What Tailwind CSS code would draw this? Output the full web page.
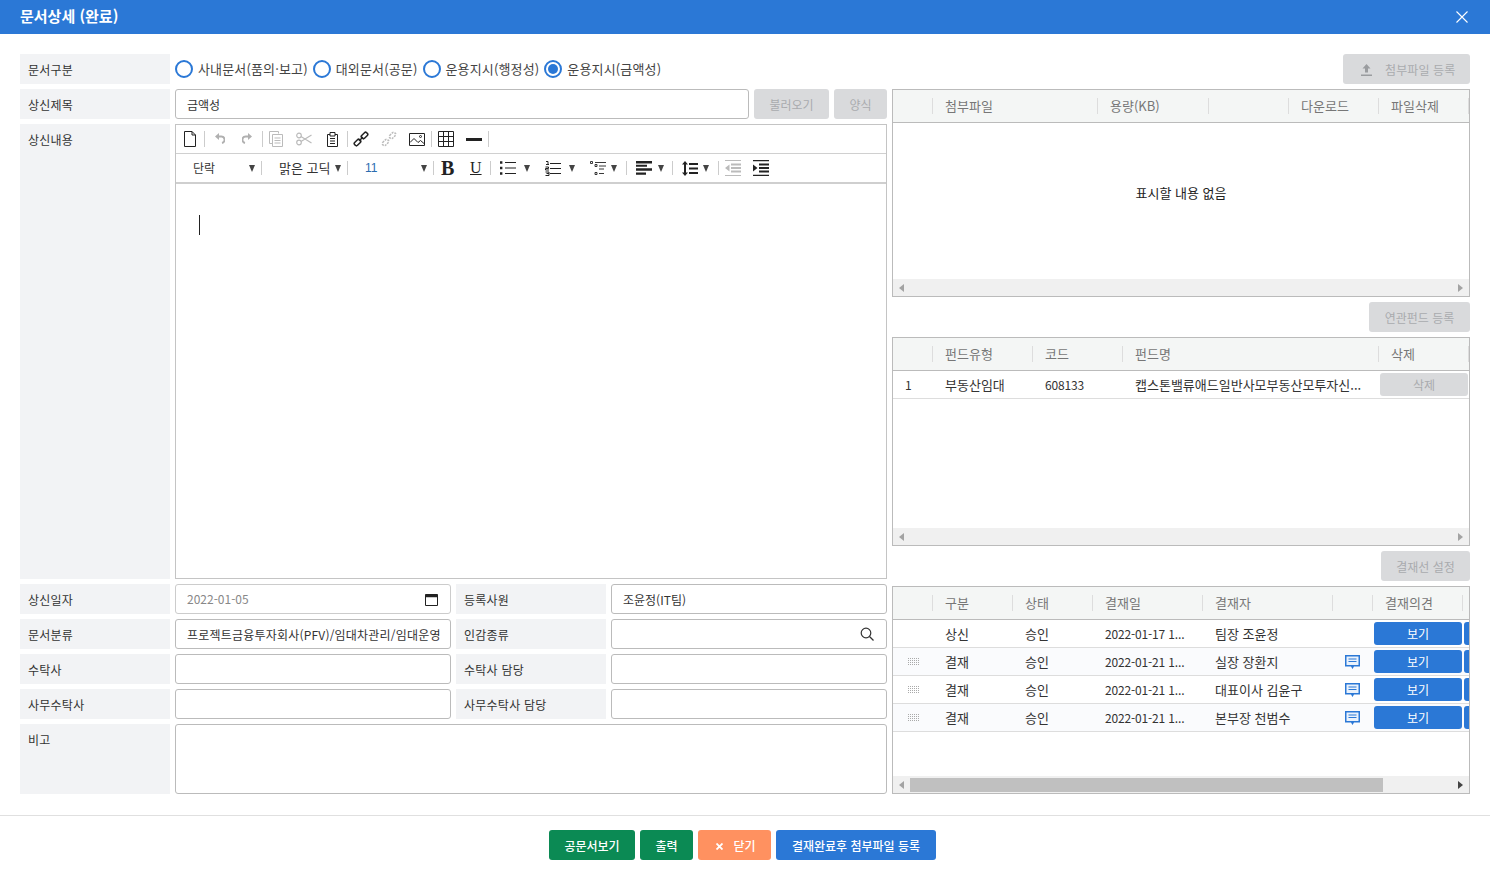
<!DOCTYPE html>
<html lang="ko"><head><meta charset="utf-8"><title>문서상세</title>
<script src="https://cdn.jsdelivr.net/npm/@tailwindcss/browser@4"></script></head>
<body class="m-0 bg-white">
<div class="w-[1490px] h-[875px] overflow-hidden flex flex-col font-['Noto_Sans_CJK_KR','Noto_Sans',sans-serif] text-[12px] text-[#333] bg-white">
  <header class="h-[34px] shrink-0 bg-[#2b78d6] flex items-center justify-between pl-5 pr-[22px] pb-[2px] text-white">
    <h1 class="text-[15px] font-bold">문서상세 (완료)</h1>
    <svg class="mt-[2px]" width="12" height="12" viewBox="0 0 12 12" fill="none" stroke="#fff" stroke-width="1.1"><path d="M0.5 0.5 11.5 11.5M11.5 0.5 0.5 11.5"/></svg>
  </header>

  <main class="flex gap-[5px] px-5 pt-5 h-[781px] shrink-0">
    <!-- left -->
    <div class="w-[867px] flex flex-col gap-[5px]">
      <div class="flex gap-[5px] h-[30px]">
        <div class="w-[150px] bg-[#f2f3f5] flex items-center pl-2 pt-[2px] tracking-[0.25px]">문서구분</div>
        <div class="flex items-center text-[13px] text-[#444] tracking-[0.15px]">
          <span class="w-[18px] h-[18px] rounded-full border-2 border-[#2b78d6]"></span><span class="ml-[5px]">사내문서(품의·보고)</span>
          <span class="ml-[5px] w-[18px] h-[18px] rounded-full border-2 border-[#2b78d6]"></span><span class="ml-[5px]">대외문서(공문)</span>
          <span class="ml-[5px] w-[18px] h-[18px] rounded-full border-2 border-[#2b78d6]"></span><span class="ml-[5px]">운용지시(행정성)</span>
          <span class="ml-[5px] w-[18px] h-[18px] rounded-full border-2 border-[#2b78d6] flex items-center justify-center"><span class="w-[10px] h-[10px] rounded-full bg-[#2b78d6]"></span></span><span class="ml-[5px]">운용지시(금액성)</span>
        </div>
      </div>
      <div class="flex gap-[5px] h-[30px]">
        <div class="w-[150px] bg-[#f2f3f5] flex items-center pl-2 pt-[2px] tracking-[0.25px]">상신제목</div>
        <div class="w-[574px] border border-[#bbb] rounded-[3px] flex items-center pl-[11px] pt-[2px]">금액성</div>
        <button class="w-[75px] bg-[#d9dadc] rounded-[3px] text-[#a9abae] pt-[2px]">불러오기</button>
        <button class="w-[53px] bg-[#d9dadc] rounded-[3px] text-[#a9abae] pt-[2px]">양식</button>
      </div>
      <div class="flex gap-[5px] h-[455px]">
        <div class="w-[150px] bg-[#f2f3f5] pl-2 pt-[7px] tracking-[0.25px]">상신내용</div>
        <div class="w-[712px] border border-[#c4c4c4] flex flex-col">
          <div class="h-[29px] shrink-0 flex items-center border-b border-[#d0d0d0] text-[#333]">
            <svg class="ml-[8px]" width="12" height="16" viewBox="0 0 12 16" fill="none" stroke="#222"><path d="M.5.5h7.500l3.500 3.500v11.500H.5zM8 .5v3.500h3.500"/></svg>
            <span class="ml-[8px] w-px h-[16px] bg-[#ccc]"></span>
            <svg class="ml-[10px]" width="10" height="12" viewBox="0 0 10 12" fill="none"><path fill="#b0b0b0" d="M4 0v7L0 3.500z"/><path stroke="#b0b0b0" stroke-width="2" d="M3 3.500h2.500a3.300 3.300 0 0 1 1.500 6.500"/></svg>
            <svg class="ml-[17px]" width="10" height="12" viewBox="0 0 10 12" fill="none"><path fill="#b0b0b0" d="M6 0v7l4-3.500z"/><path stroke="#b0b0b0" stroke-width="2" d="M7 3.500H4.500a3.300 3.300 0 0 0-1.500 6.500"/></svg>
            <span class="ml-[10px] w-px h-[16px] bg-[#ccc]"></span>
            <svg class="ml-[6px]" width="14" height="16" viewBox="0 0 14 16" fill="none" stroke="#bbb"><path d="M.5.500h9v2M3.500 3.500h10v12h-10zM.5.500v12h3M5.500 7h6M5.500 9.500h6M5.500 12h6"/></svg>
            <svg class="ml-[13px]" width="16" height="14" viewBox="0 0 16 14" fill="none" stroke="#bbb" stroke-width="1.200"><circle cx="3" cy="3.500" r="2.300"/><circle cx="3" cy="10.500" r="2.300"/><path d="M5 4.500 15.500 11M5 9.500 15.500 3"/></svg>
            <svg class="ml-[15px]" width="11" height="15" viewBox="0 0 11 15" fill="none" stroke="#222"><path d="M3 2.500H.5v12h10v-12H8M3 .5h5v3.500H3zM3 6.500h5M3 9h5M3 11.500h5"/></svg>
            <span class="ml-[9px] w-px h-[16px] bg-[#ccc]"></span>
            <svg class="ml-[5px]" width="16" height="16" viewBox="0 0 16 16" fill="none" stroke="#222" stroke-width="1.500"><rect x="-3.500" y="-2" width="7" height="4" rx="1.500" transform="translate(4.500 11.500) rotate(-45)"/><rect x="-3.500" y="-2" width="7" height="4" rx="1.500" transform="translate(11.500 4.500) rotate(-45)"/><path d="M6 10 10 6"/></svg>
            <svg class="ml-[12px]" width="16" height="16" viewBox="0 0 16 16" fill="none" stroke="#bbb" stroke-width="1.500" stroke-dasharray="2 1"><rect x="-3.500" y="-2" width="7" height="4" rx="1.500" transform="translate(4.500 11.500) rotate(-45)"/><rect x="-3.500" y="-2" width="7" height="4" rx="1.500" transform="translate(11.500 4.500) rotate(-45)"/></svg>
            <svg class="ml-[12px]" width="16" height="13" viewBox="0 0 16 13" fill="none" stroke="#222"><path d="M.5.5h15v12H.5zM1 9.500l4-4 4 4 2.500-2 3.500 3"/><circle cx="11.500" cy="3.500" r="1"/></svg>
            <span class="ml-[6px] w-px h-[16px] bg-[#ccc]"></span>
            <svg class="ml-[6px]" width="16" height="16" viewBox="0 0 16 16" fill="none" stroke="#222"><path d="M.5.5h15v15H.5zM5.500.5v15M10.500.5v15M.5 5.500h15M.5 10.500h15"/></svg>
            <span class="ml-[12px] w-[16px] h-[3px] bg-[#222]"></span>
            <span class="ml-[6px] w-px h-[16px] bg-[#ccc]"></span>
          </div>
          <div class="h-[30px] shrink-0 flex items-center border-b-2 border-[#cfcfcf] text-[#333]">
            <span class="ml-[17px] w-[56px]">단락</span>
            <svg width="6" height="7" viewBox="0 0 6 7"><path fill="#444" d="M0 0h6L3 7z"/></svg>
            <span class="ml-[6px] w-px h-[14px] bg-[#ccc]"></span>
            <span class="ml-[17px] w-[56px] text-[13px]">맑은 고딕</span>
            <svg width="6" height="7" viewBox="0 0 6 7"><path fill="#444" d="M0 0h6L3 7z"/></svg>
            <span class="ml-[6px] w-px h-[14px] bg-[#ccc]"></span>
            <span class="ml-[17px] w-[56px] text-[#2b6cb0] font-['Liberation_Sans',sans-serif]">11</span>
            <svg width="6" height="7" viewBox="0 0 6 7"><path fill="#444" d="M0 0h6L3 7z"/></svg>
            <span class="ml-[6px] w-px h-[14px] bg-[#ccc]"></span>
            <span class="ml-[7px] w-[15px] text-[20px] leading-none font-bold font-['Liberation_Serif',serif] text-[#222]">B</span>
            <span class="ml-[14px] w-[13px] text-[16px] leading-[18px] underline font-['Liberation_Serif',serif] text-[#222]">U</span>
            <span class="ml-[7px] w-px h-[14px] bg-[#ccc]"></span>
            <svg class="ml-[9px]" width="16" height="14" viewBox="0 0 16 14" fill="none" stroke="#222"><path d="M5 1.500h11M5 7h11M5 12.500h11"/><path stroke-width="2.400" stroke-dasharray="2.400 3.100" d="M1.200 .3v13.400"/></svg>
            <svg class="ml-[8px]" width="6" height="7" viewBox="0 0 6 7"><path fill="#444" d="M0 0h6L3 7z"/></svg>
            <span class="ml-[7px] w-px h-[14px] bg-transparent"></span>
            <svg class="ml-[7px]" width="16" height="15" viewBox="0 0 16 15" fill="none" stroke="#222"><path d="M5 2.500h11M5 7.500h11M5 12.500h11M1 .5h2v3M1 3.500h3M.5 6h3v1.500h-3v1.500h3.500M.5 11h3.500v3.500H.5M1.500 12.500H4"/></svg>
            <svg class="ml-[8px]" width="6" height="7" viewBox="0 0 6 7"><path fill="#444" d="M0 0h6L3 7z"/></svg>
            <span class="ml-[7px] w-px h-[14px] bg-transparent"></span>
            <svg class="ml-[7px]" width="16" height="15" viewBox="0 0 16 15" fill="none" stroke="#222"><path d="M.5.5h2v2h-2zM5 3.500h2v2H5zM5 11.500h2v2H5zM5 1.500h11M9 5h7M9 8h5M9 12.500h5" stroke-width=".9"/></svg>
            <svg class="ml-[5px]" width="6" height="7" viewBox="0 0 6 7"><path fill="#444" d="M0 0h6L3 7z"/></svg>
            <span class="ml-[9px] w-px h-[14px] bg-[#ccc]"></span>
            <svg class="ml-[9px]" width="16" height="14" viewBox="0 0 16 14"><path fill="#222" d="M0 0h16v2.500H0zM0 3.800h11v2H0zM0 7.300h16v2.500H0zM0 11.500h10v2.200H0z"/></svg>
            <svg class="ml-[6px]" width="6" height="7" viewBox="0 0 6 7"><path fill="#444" d="M0 0h6L3 7z"/></svg>
            <span class="ml-[8px] w-px h-[14px] bg-[#ccc]"></span>
            <svg class="ml-[9px]" width="16" height="15" viewBox="0 0 16 15"><path fill="#222" d="M7 2h9v2H7zM7 6.500h9v2H7zM7 11h9v2H7zM3 0l3 3.500H4v8h2L3 15l-3-3.500h2v-8H0z"/></svg>
            <svg class="ml-[5px]" width="6" height="7" viewBox="0 0 6 7"><path fill="#444" d="M0 0h6L3 7z"/></svg>
            <span class="ml-[9px] w-px h-[14px] bg-[#ccc]"></span>
            <svg class="ml-[6px]" width="16" height="16" viewBox="0 0 16 16"><path fill="#bbb" d="M0 0h16v1H0zM6 3.500h10v2H6zM6 7h10v2H6zM6 10.500h10v2H6zM0 15h16v1H0zM4.500 4.500v7L0 8z"/></svg>
            <svg class="ml-[12px]" width="16" height="16" viewBox="0 0 16 16"><path fill="#222" d="M0 0h16v1.200H0zM6 3.500h10v2H6zM6 7h10v2H6zM6 10.500h10v2H6zM0 14.800h16V16H0zM0 4.500v7L4.500 8z"/></svg>
          </div>
          <div class="flex-1 relative">
            <span class="absolute left-[23px] top-[31px] w-px h-[20px] bg-[#222]"></span>
          </div>
        </div>
      </div>
      <div class="flex gap-[5px] h-[30px]">
        <div class="w-[150px] bg-[#f2f3f5] flex items-center pl-2 pt-[2px] tracking-[0.25px]">상신일자</div>
        <div class="w-[276px] border border-[#ccc] rounded-[3px] flex items-center justify-between pl-[11px] pr-[12px] text-[#888]">2022-01-05
          <svg width="13" height="13" viewBox="0 0 13 13" fill="none" stroke="#222"><path d="M.5 1.500h12v11H.5z"/><path stroke-width="2.500" d="M0 3h13"/></svg></div>
        <div class="w-[150px] bg-[#f2f3f5] flex items-center pl-2 pt-[2px] tracking-[0.25px]">등록사원</div>
        <div class="w-[276px] border border-[#bbb] rounded-[3px] flex items-center pl-[11px] pt-[2px]">조윤정(IT팀)</div>
      </div>
      <div class="flex gap-[5px] h-[30px]">
        <div class="w-[150px] bg-[#f2f3f5] flex items-center pl-2 pt-[2px] tracking-[0.25px]">문서분류</div>
        <div class="w-[276px] border border-[#bbb] rounded-[3px] flex items-center pl-[11px] pr-[6px] pt-[2px] whitespace-nowrap tracking-[0.2px]"><span>프로젝트금융투자회사(PFV)/임대차관리/임대운영</span></div>
        <div class="w-[150px] bg-[#f2f3f5] flex items-center pl-2 pt-[2px] tracking-[0.25px]">인감종류</div>
        <div class="w-[276px] border border-[#bbb] rounded-[3px] flex items-center justify-end pr-[12px]">
          <svg width="14" height="14" viewBox="0 0 14 14" fill="none" stroke="#333" stroke-width="1.200"><circle cx="6" cy="6" r="4.800"/><path d="M9.500 9.500 13.500 13.500"/></svg></div>
      </div>
      <div class="flex gap-[5px] h-[30px]">
        <div class="w-[150px] bg-[#f2f3f5] flex items-center pl-2 pt-[2px] tracking-[0.25px]">수탁사</div>
        <div class="w-[276px] border border-[#bbb] rounded-[3px]"></div>
        <div class="w-[150px] bg-[#f2f3f5] flex items-center pl-2 pt-[2px] tracking-[0.25px]">수탁사 담당</div>
        <div class="w-[276px] border border-[#bbb] rounded-[3px]"></div>
      </div>
      <div class="flex gap-[5px] h-[30px]">
        <div class="w-[150px] bg-[#f2f3f5] flex items-center pl-2 pt-[2px] tracking-[0.25px]">사무수탁사</div>
        <div class="w-[276px] border border-[#bbb] rounded-[3px]"></div>
        <div class="w-[150px] bg-[#f2f3f5] flex items-center pl-2 pt-[2px] tracking-[0.25px]">사무수탁사 담당</div>
        <div class="w-[276px] border border-[#bbb] rounded-[3px]"></div>
      </div>
      <div class="flex gap-[5px] h-[70px]">
        <div class="w-[150px] bg-[#f2f3f5] pl-2 pt-[7px] tracking-[0.25px]">비고</div>
        <div class="w-[712px] border border-[#bbb] rounded-[3px]"></div>
      </div>
    </div>

    <!-- right -->
    <div class="w-[578px] flex flex-col gap-[5px]">
      <div class="h-[30px] flex justify-end">
        <button class="w-[127px] bg-[#d9dadc] rounded-[3px] text-[#a9abae] flex items-center pl-[18px] tracking-[0.1px]">
          <svg width="11" height="12" class="mt-[2px]" viewBox="0 0 11 12"><path fill="#9a9c9f" d="M5.500 0l4 4.500H7v4H4v-4H1.500zM0 10.500h11V12H0z"/></svg>
          <span class="ml-[13px] pt-[2px]">첨부파일 등록</span>
        </button>
      </div>

      <div class="h-[208px] border border-[#bbb] flex flex-col">
        <div class="h-[33px] shrink-0 bg-[#f4f6f5] border-b border-[#bbb] flex items-center text-[#777] text-[13px] *:shrink-0">
          <span class="w-[39px]"></span>
          <span class="w-[165px] h-[16px] leading-[16px] border-l border-[#ddd] pl-3">첨부파일</span>
          <span class="w-[111px] h-[16px] leading-[16px] border-l border-[#ddd] pl-3">용량(KB)</span>
          <span class="w-[80px] h-[16px] border-l border-[#ddd]"></span>
          <span class="w-[90px] h-[16px] leading-[16px] border-l border-[#ddd] pl-3">다운로드</span>
          <span class="w-[90px] h-[16px] leading-[16px] border-l border-[#ddd] pl-3">파일삭제</span>
          <span class="h-[16px] border-l border-[#ddd]"></span>
        </div>
        <div class="flex-1 flex items-center justify-center text-[#222] text-[13px] pb-[16px]">표시할 내용 없음</div>
        <div class="h-[17px] shrink-0 bg-[#f0f0f0] flex items-center justify-between px-[6px]">
          <svg width="5" height="8" viewBox="0 0 5 8"><path fill="#a3a3a3" d="M5 0v8L0 4z"/></svg>
          <svg width="5" height="8" viewBox="0 0 5 8"><path fill="#a3a3a3" d="M0 0v8l5-4z"/></svg>
        </div>
      </div>

      <div class="h-[30px] flex justify-end">
        <button class="w-[101px] bg-[#d9dadc] rounded-[3px] text-[#a9abae] pt-[2px]">연관펀드 등록</button>
      </div>

      <div class="h-[209px] border border-[#bbb] flex flex-col">
        <div class="h-[33px] shrink-0 bg-[#f4f6f5] border-b border-[#bbb] flex items-center text-[#777] text-[13px] *:shrink-0">
          <span class="w-[39px]"></span>
          <span class="w-[100px] h-[16px] leading-[15px] border-l border-[#ddd] pl-3">펀드유형</span>
          <span class="w-[90px] h-[16px] leading-[15px] border-l border-[#ddd] pl-3">코드</span>
          <span class="w-[256px] h-[16px] leading-[15px] border-l border-[#ddd] pl-3">펀드명</span>
          <span class="w-[90px] h-[16px] leading-[15px] border-l border-[#ddd] pl-3">삭제</span>
          <span class="h-[16px] border-l border-[#ddd]"></span>
        </div>
        <div class="h-[28px] shrink-0 border-b border-[#ddd] flex items-center text-[13px] *:shrink-0">
          <span class="w-[39px] pl-3 text-[12px]">1</span>
          <span class="w-[100px] pl-[13px]">부동산임대</span>
          <span class="w-[90px] pl-[13px] text-[12px] tracking-[-0.15px]">608133</span>
          <span class="w-[256px] pl-[13px] whitespace-nowrap">캡스톤밸류애드일반사모부동산모투자신...</span>
          <button class="ml-[2px] w-[88px] h-[23px] bg-[#d9dadc] rounded-[3px] text-[#a9abae] text-[12px]">삭제</button>
        </div>
        <div class="flex-1"></div>
        <div class="h-[17px] shrink-0 bg-[#f0f0f0] flex items-center justify-between px-[6px]">
          <svg width="5" height="8" viewBox="0 0 5 8"><path fill="#a3a3a3" d="M5 0v8L0 4z"/></svg>
          <svg width="5" height="8" viewBox="0 0 5 8"><path fill="#a3a3a3" d="M0 0v8l5-4z"/></svg>
        </div>
      </div>

      <div class="h-[30px] flex justify-end">
        <button class="w-[89px] bg-[#d9dadc] rounded-[3px] text-[#a9abae] pt-[2px]">결재선 설정</button>
      </div>

      <div class="h-[208px] border border-[#bbb] flex flex-col overflow-hidden">
        <div class="h-[33px] shrink-0 bg-[#f4f6f5] border-b border-[#bbb] flex items-center text-[#777] text-[13px] *:shrink-0">
          <span class="w-[39px]"></span>
          <span class="w-[80px] h-[16px] leading-[15px] border-l border-[#ddd] pl-3">구분</span>
          <span class="w-[80px] h-[16px] leading-[15px] border-l border-[#ddd] pl-3">상태</span>
          <span class="w-[110px] h-[16px] leading-[15px] border-l border-[#ddd] pl-3">결재일</span>
          <span class="w-[130px] h-[16px] leading-[15px] border-l border-[#ddd] pl-3">결재자</span>
          <span class="w-[40px] h-[16px] border-l border-[#ddd]"></span>
          <span class="w-[90px] h-[16px] leading-[15px] border-l border-[#ddd] pl-3">결재의견</span>
          <span class="h-[16px] border-l border-[#ddd]"></span>
        </div>
        <div class="h-[28px] shrink-0 border-b border-[#ddd] flex items-center text-[13px] *:shrink-0">
          <span class="w-[39px]"></span><span class="w-[80px] pl-[13px]">상신</span><span class="w-[80px] pl-[13px]">승인</span><span class="w-[110px] pl-[13px] text-[12px] tracking-[-0.15px]">2022-01-17 1...</span><span class="w-[130px] pl-[13px]">팀장 조윤정</span><span class="w-[42px]"></span>
          <button class="w-[88px] h-[23px] bg-[#2b78d6] rounded-[3px] text-white text-[12px]">보기</button><span class="ml-[2px] w-[20px] h-[23px] bg-[#2b78d6] rounded-[3px]"></span>
        </div>
        <div class="h-[28px] shrink-0 border-b border-[#ddd] bg-[#fafbfd] flex items-center text-[13px] *:shrink-0">
          <span class="w-[39px] pl-[15px]"><svg width="11" height="8" viewBox="0 0 11 8" fill="none" stroke="#aaa" stroke-dasharray="1 1"><path d="M0 .5h11M0 2.500h11M0 4.500h11M0 6.500h11" stroke-width="1"/></svg></span><span class="w-[80px] pl-[13px]">결재</span><span class="w-[80px] pl-[13px]">승인</span><span class="w-[110px] pl-[13px] text-[12px] tracking-[-0.15px]">2022-01-21 1...</span><span class="w-[130px] pl-[13px]">실장 장환지</span>
          <span class="w-[42px] pl-[13px]"><svg width="15" height="14" viewBox="0 0 15 14"><path fill="#2b78d6" d="M0 0h15v11.500H9L7.500 14 6 11.500H0z"/><path fill="#eaf2fc" d="M1.500 1.500h12v8.500h-12z"/><path fill="#2b78d6" d="M3.500 3.500h8v1h-8zM3.500 6h8v1h-8z"/></svg></span>
          <button class="w-[88px] h-[23px] bg-[#2b78d6] rounded-[3px] text-white text-[12px]">보기</button><span class="ml-[2px] w-[20px] h-[23px] bg-[#2b78d6] rounded-[3px]"></span>
        </div>
        <div class="h-[28px] shrink-0 border-b border-[#ddd] flex items-center text-[13px] *:shrink-0">
          <span class="w-[39px] pl-[15px]"><svg width="11" height="8" viewBox="0 0 11 8" fill="none" stroke="#aaa" stroke-dasharray="1 1"><path d="M0 .5h11M0 2.500h11M0 4.500h11M0 6.500h11" stroke-width="1"/></svg></span><span class="w-[80px] pl-[13px]">결재</span><span class="w-[80px] pl-[13px]">승인</span><span class="w-[110px] pl-[13px] text-[12px] tracking-[-0.15px]">2022-01-21 1...</span><span class="w-[130px] pl-[13px]">대표이사 김윤구</span>
          <span class="w-[42px] pl-[13px]"><svg width="15" height="14" viewBox="0 0 15 14"><path fill="#2b78d6" d="M0 0h15v11.500H9L7.500 14 6 11.500H0z"/><path fill="#eaf2fc" d="M1.500 1.500h12v8.500h-12z"/><path fill="#2b78d6" d="M3.500 3.500h8v1h-8zM3.500 6h8v1h-8z"/></svg></span>
          <button class="w-[88px] h-[23px] bg-[#2b78d6] rounded-[3px] text-white text-[12px]">보기</button><span class="ml-[2px] w-[20px] h-[23px] bg-[#2b78d6] rounded-[3px]"></span>
        </div>
        <div class="h-[28px] shrink-0 border-b border-[#ddd] bg-[#fafbfd] flex items-center text-[13px] *:shrink-0">
          <span class="w-[39px] pl-[15px]"><svg width="11" height="8" viewBox="0 0 11 8" fill="none" stroke="#aaa" stroke-dasharray="1 1"><path d="M0 .5h11M0 2.500h11M0 4.500h11M0 6.500h11" stroke-width="1"/></svg></span><span class="w-[80px] pl-[13px]">결재</span><span class="w-[80px] pl-[13px]">승인</span><span class="w-[110px] pl-[13px] text-[12px] tracking-[-0.15px]">2022-01-21 1...</span><span class="w-[130px] pl-[13px]">본부장 천범수</span>
          <span class="w-[42px] pl-[13px]"><svg width="15" height="14" viewBox="0 0 15 14"><path fill="#2b78d6" d="M0 0h15v11.500H9L7.500 14 6 11.500H0z"/><path fill="#eaf2fc" d="M1.500 1.500h12v8.500h-12z"/><path fill="#2b78d6" d="M3.500 3.500h8v1h-8zM3.500 6h8v1h-8z"/></svg></span>
          <button class="w-[88px] h-[23px] bg-[#2b78d6] rounded-[3px] text-white text-[12px]">보기</button><span class="ml-[2px] w-[20px] h-[23px] bg-[#2b78d6] rounded-[3px]"></span>
        </div>
        <div class="flex-1"></div>
        <div class="h-[17px] shrink-0 bg-[#f0f0f0] flex items-center pl-[6px] pr-[6px]">
          <svg width="5" height="8" viewBox="0 0 5 8"><path fill="#a3a3a3" d="M5 0v8L0 4z"/></svg>
          <span class="ml-[6px] w-[473px] h-[14px] bg-[#c0c0c0]"></span>
          <svg class="ml-auto" width="5" height="8" viewBox="0 0 5 8"><path fill="#444" d="M0 0v8l5-4z"/></svg>
        </div>
      </div>
    </div>
  </main>

  <footer class="flex-1 border-t border-[#e0e0e0] flex justify-center items-start gap-[5px] pt-[14px] pr-[5px]">
    <button class="w-[86px] h-[30px] bg-[#0b8a54] rounded-[3px] text-white font-medium pt-[2px]">공문서보기</button>
    <button class="w-[53px] h-[30px] bg-[#0b8a54] rounded-[3px] text-white font-medium pt-[2px]">출력</button>
    <button class="w-[73px] h-[30px] bg-[#ff9160] rounded-[3px] text-white font-medium flex items-center justify-center gap-[10px] pl-[3px] pt-[2px]">
      <svg width="7" height="7" viewBox="0 0 7 7" fill="none" stroke="#fff" stroke-width="1.800"><path d="M.5.5l6 6M6.500.5l-6 6"/></svg><span>닫기</span></button>
    <button class="w-[160px] h-[30px] bg-[#2b78d6] rounded-[3px] text-white font-medium pt-[2px]">결재완료후 첨부파일 등록</button>
  </footer>
</div>
</body></html>
